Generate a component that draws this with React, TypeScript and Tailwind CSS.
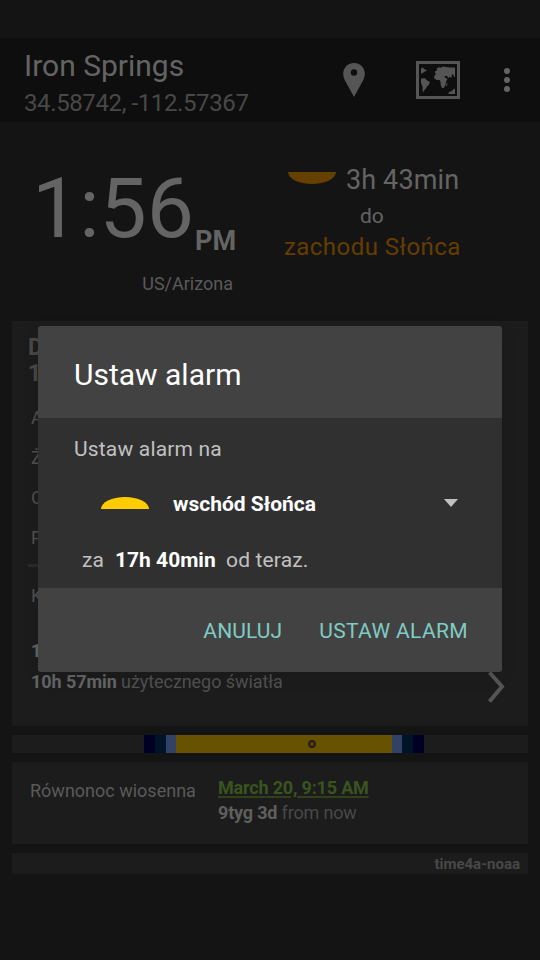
import React from "react";

function PinIcon() {
  return (
    <svg width="22" height="34" viewBox="0 0 22 34" fill="#555">
      <path
        fillRule="evenodd"
        d="M11 0C4.9 0 .2 4.7.2 10.700c0 2.600.7 4.600 1.900 7.100L11 34l8.900-16.200c1.200-2.500 1.900-4.500 1.900-7.100C21.800 4.700 17.100 0 11 0Zm0 6.300a3.200 3.200 0 1 1 0 6.400 3.200 3.200 0 0 1 0-6.400Z"
      />
    </svg>
  );
}

function MapIcon() {
  return (
    <svg width="44" height="38" viewBox="0 0 44 38" fill="#555">
      <path fillRule="evenodd" d="M0 0h44v38H0ZM3 3v32h38V3Z" />
      <path d="M5 7.500 7 6.500l1 1.500 1.500.5L11 10l-2 .3-1.500 1.200L5 12.700Z" />
      <path d="M5 17.500 9 17.300l1.500 1.700 3.300 2-.8 2.500-2 2-1.500 2.500L8 29.500 7.500 31 6.500 30.500 6.700 26 5 22Z" />
      <path d="M19 12.300v-2L21 9.500l-.3-2 2-1.300 2 .5L27 5.600l3 .4 4 .6h5v9.500l-1-.4-.8-2.200-1.700.2.3 2.500-1.300.2-1-1-1 1.800-1.500-2.200H28l-3.500-.5-.5-1.500-2.500.3Z" />
      <path d="M18.500 14.500 21 12.300l3 .5 3.500 1L30 17.500h1.700L30 21l-.5 3-1.700 3H26l-1.300-3-.2-3.500-1-1.500h-3l-2.500-2Z" />
      <path d="M30.500 22.300l1-.3-.5 2.800-1 .3ZM39 27.500V33h-6.700l.7-2 3-1 1-1.500Z" />
    </svg>
  );
}

function Header() {
  return (
    <header className="flex h-[84px] bg-[#0e0e0e] pl-6">
      <div className="w-[319px] pt-[10px] whitespace-nowrap">
        <div className="h-[36px] text-[30px] leading-[36px] text-[#646464]">Iron Springs</div>
        <div className="mt-[5px] text-[24px] leading-[28px] tracking-[-0.39px] text-[#484848]">34.58742, -112.57367</div>
      </div>
      <div className="pt-[25px]"><PinIcon /></div>
      <div className="ml-[51px] pt-[23px]"><MapIcon /></div>
      <div className="ml-[44px] flex flex-col gap-[3px] pt-[30px]">
        <i className="size-[6px] rounded-full bg-[#646464]" />
        <i className="size-[6px] rounded-full bg-[#646464]" />
        <i className="size-[6px] rounded-full bg-[#646464]" />
      </div>
    </header>
  );
}

function Clock() {
  return (
    <section className="flex h-[199px] whitespace-nowrap text-[#646464]">
      <div className="w-[270px] pt-[45px]">
        <div className="flex h-[90px] pl-[32px]">
          <span className="w-[163px] text-[84px] leading-[84px]">1:56</span>
          <span className="pt-[58px] text-[27px] leading-[32px] font-bold">PM</span>
        </div>
        <div className="mt-[16px] pr-[37px] text-right text-[18px] leading-[22px] text-[#5a5a5a]">US/Arizona</div>
      </div>
      <div className="pt-[42px]">
        <div className="flex h-[32px] pl-[18px]">
          <i className="mt-[8px] h-[12px] w-[48px] rounded-b-[50%_100%] bg-[#664000]" />
          <span className="ml-[10px] text-[27px] leading-[32px] tracking-[0.12px]">3h 43min</span>
        </div>
        <div className="mt-[7px] pl-[90px] text-[21px] leading-[26px]">do</div>
        <div className="mt-[3px] pl-[14px] text-[24px] leading-[30px] tracking-[0.45px] text-[#663d00]">zachodu Słońca</div>
      </div>
    </section>
  );
}

function DayCard() {
  return (
    <section className="mx-3 flex h-[405px] justify-between bg-[#1c1c1c] pl-[16px] text-[18px] text-[#505050]">
      <div className="w-[300px] pt-[14px] whitespace-nowrap">
        <div className="text-[23px] leading-[26px] font-bold text-[#484848]">D<br />1</div>
        <div className="mt-[11px] pl-[3px] leading-[40px]">A<br />Ż<br />O<br />P</div>
        <div className="mt-[6px] h-[3px] w-[20px] bg-[#2b2b2b]" />
        <div className="mt-[17px] pl-[3px] leading-[24px]">K</div>
        <div className="mt-[31px] pl-[3px] leading-[24px] font-bold text-[#646464]">1</div>
        <div className="mt-[7px] pl-[3px] leading-[24px] tracking-[-0.07px]">
          <b className="text-[#646464]">10h 57min</b> użytecznego światła
        </div>
      </div>
      <svg className="mt-[349px] mr-[23px]" width="18" height="34" viewBox="0 0 18 34" fill="none">
        <path d="M2.500 2.500 15 16.500 2.500 31.500" stroke="#555" strokeWidth="4" />
      </svg>
    </section>
  );
}

function DayBar() {
  return (
    <div className="mx-3 mt-[9px] flex h-[18px] bg-[#1c1c1c] pl-[132px]">
      <i className="w-[11px] bg-[#000024]" />
      <i className="w-[11px] bg-[#001428]" />
      <i className="w-[10px] bg-[#324166]" />
      <span className="flex w-[216px] items-center bg-[#665200] pl-[132px]">
        <i className="size-[8px] rounded-full border-2 border-[#202020] bg-[#664000]" />
      </span>
      <i className="w-[10px] bg-[#324166]" />
      <i className="w-[11px] bg-[#001428]" />
      <i className="w-[11px] bg-[#000024]" />
    </div>
  );
}

function EquinoxCard() {
  return (
    <section className="mx-3 mt-[9px] flex h-[82px] bg-[#1c1c1c] pl-[18px] text-[18px] whitespace-nowrap">
      <div className="w-[188px] pt-[17px] leading-[24px] text-[#5a5a5a]">Równonoc wiosenna</div>
      <div className="pt-[13px] leading-[25px] tracking-[-0.18px] text-[#484848]">
        <div className="font-bold text-[#3a541f] underline decoration-[#304119] decoration-2 underline-offset-2">March 20, 9:15 AM</div>
        <div><b className="text-[#5f5f5f]">9tyg 3d</b> from now</div>
      </div>
    </section>
  );
}

function AlarmDialog() {
  return (
    <div className="absolute top-[326px] left-[38px] h-[346px] w-[464px] overflow-hidden rounded-[3px] bg-[#424242] whitespace-nowrap shadow-[0_4px_16px_rgba(0,0,0,0.1)]">
      <h2 className="h-[92px] pt-[31px] pl-[36px] text-[30px] leading-[36px] text-white">Ustaw alarm</h2>
      <div className="h-[170px] bg-[#303030] pt-[18px] text-[21px] leading-[26px] text-[#c1c1c1]">
        <div className="pl-[36px] tracking-[0.18px]">Ustaw alarm na</div>
        <div className="mt-[29px] flex pl-[63px]">
          <i className="mt-[6px] h-[12px] w-[48px] rounded-t-[50%_100%] bg-[#fc0]" />
          <b className="ml-[24px] w-[271px] text-white">wschód Słońca</b>
          <svg className="mt-[8px]" width="14" height="8" viewBox="0 0 14 8"><path d="M0 0h14L7 8Z" fill="#c1c1c1" /></svg>
        </div>
        <div className="mt-[30px] flex pl-[44px]">
          <span className="w-[33px]">za</span>
          <b className="w-[111px] text-white">17h 40min</b>
          <span className="tracking-[0.15px]">od teraz.</span>
        </div>
      </div>
      <div className="flex justify-end gap-[37px] pt-[30px] pr-[34px] text-[21px] leading-[26px] text-[#80cbc4]">
        <button className="tracking-[0.1px]">ANULUJ</button>
        <button className="tracking-[0.36px]">USTAW ALARM</button>
      </div>
    </div>
  );
}

export default function App() {
  return (
    <main className="relative h-[960px] w-[540px] overflow-hidden bg-[#141414] pt-[38px] font-[Roboto,sans-serif]">
      <Header />
      <Clock />
      <DayCard />
      <DayBar />
      <EquinoxCard />
      <footer className="mx-3 mt-[9px] h-[21px] bg-[#1c1c1c] pr-[8px] text-right text-[15px] leading-[22px] font-bold text-[#484848]">time4a-noaa</footer>
      <AlarmDialog />
    </main>
  );
}
